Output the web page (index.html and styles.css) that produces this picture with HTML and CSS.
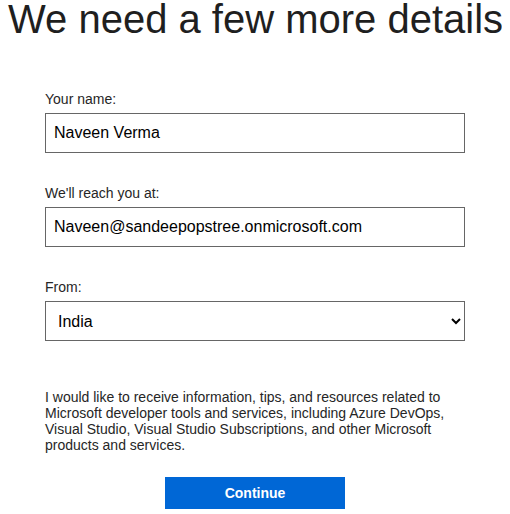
FILE: index.html
```html
<!DOCTYPE html>
<html lang="en">
<head>
<meta charset="utf-8">
<title>We need a few more details</title>
<link rel="stylesheet" href="styles.css">
</head>
<body>
<h1 class="title">We need a few more details</h1>
<form class="form">
  <div class="field">
    <label class="label" for="name">Your name:</label>
    <input class="input" id="name" type="text" value="Naveen Verma">
  </div>
  <div class="field">
    <label class="label" for="email">We'll reach you at:</label>
    <input class="input" id="email" type="text" value="Naveen@sandeepopstree.onmicrosoft.com">
  </div>
  <div class="field">
    <label class="label" for="country">From:</label>
    <select class="input select" id="country">
      <option selected>India</option>
    </select>
  </div>
  <p class="notice">I would like to receive information, tips, and resources related to Microsoft developer tools and services, including Azure DevOps, Visual Studio, Visual Studio Subscriptions, and other Microsoft products and services.</p>
  <div class="actions">
    <button class="button" type="button">Continue</button>
  </div>
</form>
</body>
</html>
```
FILE: styles.css
```css
html, body {
  background: #ffffff;
}
body {
  margin: 0 8px;
  font-family: "Liberation Sans", Arial, sans-serif;
  color: #262626;
}
.title {
  margin: 0;
  font-size: 40px;
  line-height: 38px;
  font-weight: normal;
  text-align: center;
  color: #1f1f1f;
  white-space: nowrap;
}
.form {
  width: 420px;
  margin: 53px auto 0;
}
.field {
  display: flex;
  flex-direction: column;
  margin-bottom: 32px;
}
.label {
  font-size: 14px;
  line-height: 16px;
  margin-bottom: 6px;
  color: #262626;
}
.input {
  box-sizing: border-box;
  height: 40px;
  width: 100%;
  margin: 0;
  padding: 0 8px;
  border: 1px solid #666666;
  border-radius: 0;
  background: #ffffff;
  font-family: "Liberation Sans", Arial, sans-serif;
  font-size: 16px;
  color: #000000;
  outline: none;
}
.select {
  padding: 0 4px 0 8px;
}
.notice {
  margin: 48px 0 24px;
  font-size: 14px;
  line-height: 16px;
  color: #262626;
}
.actions {
  display: flex;
  justify-content: center;
}
.button {
  width: 180px;
  height: 32px;
  border: none;
  border-radius: 0;
  background: #0067d6;
  color: #ffffff;
  font-family: "Liberation Sans", Arial, sans-serif;
  font-size: 14px;
  font-weight: bold;
  cursor: pointer;
}
```
